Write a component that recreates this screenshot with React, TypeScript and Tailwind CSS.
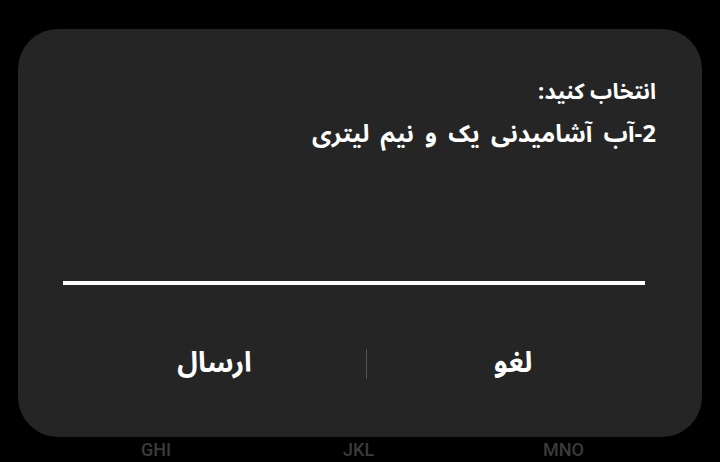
import React from "react";

export default function App() {
  const fa = { fontFamily: '"Noto Sans Arabic", "Vazirmatn", "DejaVu Sans", sans-serif' };
  return (
    <div className="w-[720px] h-[462px] bg-black relative overflow-hidden">
      <div className="absolute left-[18px] top-[29px] w-[684px] h-[408px] rounded-[40px] bg-[#252525] flex flex-col">
        <div dir="rtl" className="pt-[42px] pr-[46px] text-white font-bold text-right" style={fa}>
          <div className="text-[22px] leading-[42px]">انتخاب کنید:</div>
          <div className="text-[24px] leading-[44px] [word-spacing:5px]">2-آب آشامیدنی یک و نیم لیتری</div>
        </div>
        <div className="mt-[124px] ml-[45px] w-[582px] h-[4px] bg-white" />
        <div className="flex items-center mt-[64px] ml-[45px] w-[582px] h-[30px]" dir="ltr">
          <div className="w-[303px] text-center text-white font-bold text-[28px] leading-[30px]" style={fa}>ارسال</div>
          <div className="w-[1px] h-[30px] bg-[#555]" />
          <div className="flex-1 text-center text-white font-bold text-[28px] leading-[30px] pl-[14px]" style={fa}>لغو</div>
        </div>
      </div>
      <div className="absolute left-0 top-[437px] w-[720px] text-[#3b3b3b] text-[18px] font-medium" style={{ fontFamily: 'Roboto, sans-serif' }}>
        <div className="absolute left-[141px] top-[-1px]">GHI</div>
        <div className="absolute left-[343px] top-[-1px]">JKL</div>
        <div className="absolute left-[543px] top-[-1px]">MNO</div>
      </div>
    </div>
  );
}
